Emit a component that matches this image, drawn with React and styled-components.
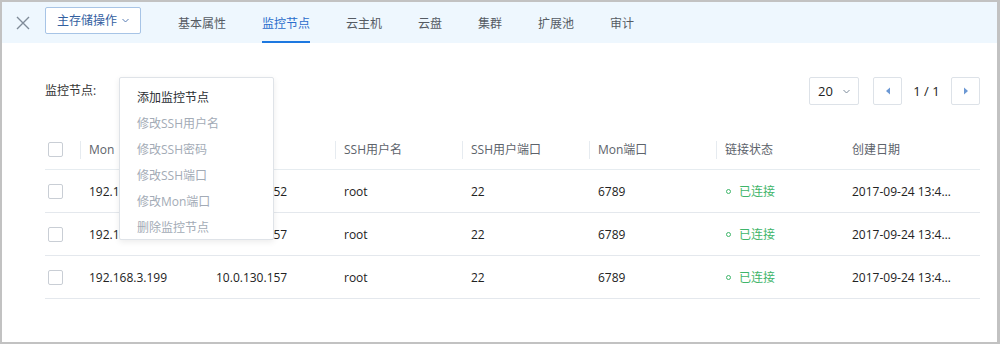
import React from 'react';
import styled, { createGlobalStyle } from 'styled-components';

const GlobalStyle = createGlobalStyle`
  html, body {
    margin: 0;
    padding: 0;
    background: #ffffff;
  }
  body {
    font-family: "Open Sans", "Noto Sans CJK SC", sans-serif;
    font-size: 12px;
    color: #333;
  }
`;

const Frame = styled.div`
  width: 1000px;
  height: 344px;
  box-sizing: border-box;
  border: 2px solid #c2c2c2;
  border-right-width: 3px;
  background: #fff;
  position: relative;
  overflow: hidden;
`;

const Header = styled.div`
  height: 41px;
  background: #eef7fe;
  display: flex;
  align-items: stretch;
`;

const CloseBtn = styled.div`
  width: 43px;
  display: flex;
  align-items: center;
  justify-content: center;
  svg { display: block; margin-left: -2px; }
`;

const OpsButton = styled.div`
  align-self: center;
  margin-top: -5px;
  height: 27px;
  width: 96px;
  box-sizing: border-box;
  border: 1px solid #a7c4e6;
  border-radius: 2px;
  background: #fff;
  color: #33609f;
  display: flex;
  align-items: center;
  justify-content: center;
  gap: 5px;
  font-size: 12px;
`;

const Tabs = styled.div`
  display: flex;
  margin-left: 19px;
`;

const Tab = styled.div`
  margin: 0 18px;
  display: flex;
  align-items: center;
  box-sizing: border-box;
  font-size: 12px;
  padding-top: 1px;
  color: ${p => (p.$active ? '#2b6dcc' : '#555b63')};
  border-bottom: 2px solid ${p => (p.$active ? '#1d78e0' : 'transparent')};
  border-top: 2px solid transparent;
`;

const Content = styled.div`
  position: relative;
  padding: 34px 17px 0 43px;
`;

const Toolbar = styled.div`
  display: flex;
  align-items: flex-start;
  justify-content: space-between;
  height: 28px;
`;

const Label = styled.div`
  padding-top: 4px;
  font-size: 12px;
  color: #333;
`;

const Pager = styled.div`
  display: flex;
  align-items: center;
`;

const SizeSelect = styled.div`
  width: 50px;
  height: 28px;
  box-sizing: border-box;
  border: 1px solid #dde2e8;
  border-radius: 2px;
  display: flex;
  align-items: center;
  padding-left: 8px;
  gap: 10px;
  font-size: 13px;
  color: #222;
  margin-right: 14px;
`;

const PageBtn = styled.div`
  width: 29px;
  height: 28px;
  box-sizing: border-box;
  border: 1px solid #dde2e8;
  border-radius: 2px;
  display: flex;
  align-items: center;
  justify-content: center;
`;

const PageText = styled.div`
  width: 49px;
  text-align: center;
  font-size: 13px;
  color: #222;
`;

const Table = styled.div`
  margin-top: 24px;
  width: 935px;
`;

const Row = styled.div`
  display: grid;
  grid-template-columns: 35px 127px 128px 127px 127px 127px 127px 137px;
  height: ${p => (p.$head ? '40px' : '42px')};
  border-bottom: 1px solid ${p => (p.$head ? '#e6ecf0' : '#e4e8ed')};
  align-items: center;
`;

const HeadCell = styled.div`
  position: relative;
  height: 100%;
  display: flex;
  align-items: center;
  padding-left: 9px;
  color: #5d636b;
  font-size: 12px;
  &::before {
    content: '';
    position: absolute;
    left: 0;
    top: 12px;
    width: 1px;
    height: 18px;
    background: ${p => (p.$sep ? '#e6ebf0' : 'transparent')};
  }
`;

const Cell = styled.div`
  padding-left: 9px;
  font-size: 12px;
  color: #222;
  white-space: nowrap;
  overflow: hidden;
  text-overflow: ellipsis;
  max-width: ${p => (p.$clip ? '103px' : 'none')};
`;

const CheckCell = styled.div`
  display: flex;
  align-items: center;
  padding-left: 3px;
`;

const Checkbox = styled.span`
  width: 15px;
  height: 15px;
  box-sizing: border-box;
  border: 1px solid #c9ced5;
  border-radius: 2px;
  background: #fff;
`;

const Status = styled.div`
  display: flex;
  align-items: center;
  padding-left: 10px;
  color: #3fb56a;
  font-size: 12px;
`;

const StatusDot = styled.span`
  width: 5px;
  height: 5px;
  box-sizing: border-box;
  border: 1.5px solid #3fb56a;
  border-radius: 50%;
  margin-right: 8px;
  margin-top: 1px;
`;

const Menu = styled.div`
  position: absolute;
  left: 117px;
  top: 34px;
  width: 155px;
  box-sizing: border-box;
  padding: 7px 0 0;
  height: 163px;
  background: #fff;
  border: 1px solid #dfe3e8;
  border-radius: 2px;
  box-shadow: 0 2px 6px rgba(0, 0, 0, 0.08);
  z-index: 5;
`;

const MenuItem = styled.div`
  height: 26px;
  line-height: 26px;
  padding-left: 17px;
  font-size: 12px;
  color: ${p => (p.$disabled ? '#a3abb6' : '#2a2e33')};
`;

const Chevron = ({ color = '#7d8b9b' }) => (
  <svg width="7" height="5" viewBox="0 0 7 5">
    <path d="M0.5 1 L3.5 4 L6.5 1" fill="none" stroke={color} strokeWidth="1" />
  </svg>
);

const Triangle = ({ dir }) => (
  <svg width="6" height="8" viewBox="0 0 6 8">
    {dir === 'left' ? (
      <path d="M5 0.5 L1 4 L5 7.5 Z" fill="#6c98d4" />
    ) : (
      <path d="M1 0.5 L5 4 L1 7.5 Z" fill="#6c98d4" />
    )}
  </svg>
);

const tabs = ['基本属性', '监控节点', '云主机', '云盘', '集群', '扩展池', '审计'];
const heads = ['Mon', '', 'SSH用户名', 'SSH用户端口', 'Mon端口', '链接状态', '创建日期'];
const rows = [
  ['192.168.3.198', '10.0.130.152'],
  ['192.168.3.197', '10.0.130.157'],
  ['192.168.3.199', '10.0.130.157'],
];
const menuItems = [
  ['添加监控节点', false],
  ['修改SSH用户名', true],
  ['修改SSH密码', true],
  ['修改SSH端口', true],
  ['修改Mon端口', true],
  ['删除监控节点', true],
];

export default function App() {
  return (
    <Frame>
      <GlobalStyle />
      <Header>
        <CloseBtn>
          <svg width="14" height="14" viewBox="0 0 14 14">
            <path d="M1 1 L13 13 M13 1 L1 13" stroke="#7f8b99" strokeWidth="1.4" />
          </svg>
        </CloseBtn>
        <OpsButton>
          主存储操作 <Chevron color="#5a7fb5" />
        </OpsButton>
        <Tabs>
          {tabs.map(t => (
            <Tab key={t} $active={t === '监控节点'}>{t}</Tab>
          ))}
        </Tabs>
      </Header>
      <Content>
        <Toolbar>
          <Label>监控节点:</Label>
          <Pager>
            <SizeSelect>
              20 <Chevron />
            </SizeSelect>
            <PageBtn><Triangle dir="left" /></PageBtn>
            <PageText>1 / 1</PageText>
            <PageBtn><Triangle dir="right" /></PageBtn>
          </Pager>
        </Toolbar>
        <Table>
          <Row $head>
            <CheckCell><Checkbox /></CheckCell>
            {heads.map((h, i) => (
              <HeadCell key={i} $sep={i < 6}>{h}</HeadCell>
            ))}
          </Row>
          {rows.map((r, i) => (
            <Row key={i}>
              <CheckCell><Checkbox /></CheckCell>
              <Cell>{r[0]}</Cell>
              <Cell>{r[1]}</Cell>
              <Cell>root</Cell>
              <Cell>22</Cell>
              <Cell>6789</Cell>
              <Status><StatusDot />已连接</Status>
              <Cell $clip>2017-09-24 13:45:12</Cell>
            </Row>
          ))}
        </Table>
        <Menu>
          {menuItems.map(([t, d]) => (
            <MenuItem key={t} $disabled={d}>{t}</MenuItem>
          ))}
        </Menu>
      </Content>
    </Frame>
  );
}
